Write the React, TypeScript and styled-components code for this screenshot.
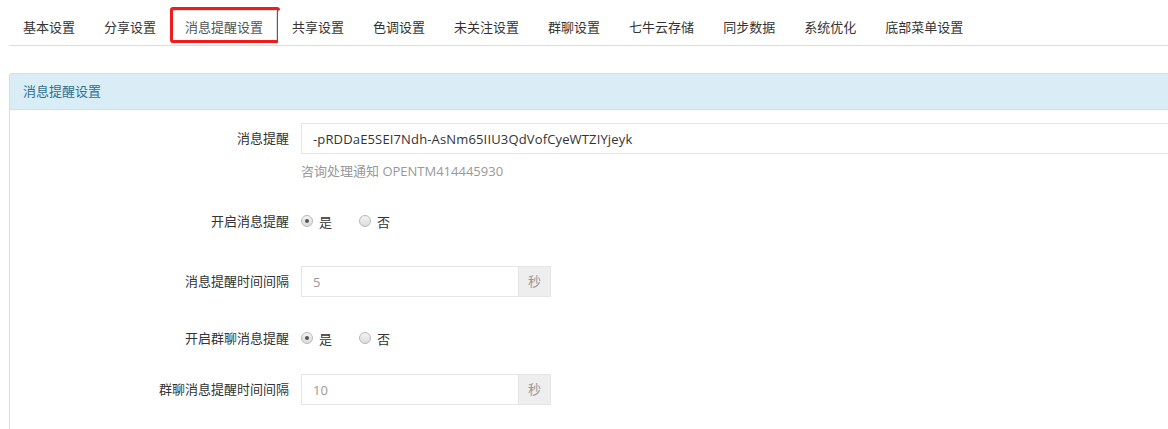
import styled, { createGlobalStyle } from "styled-components"

const GlobalStyle = createGlobalStyle`
    html, body {
        margin: 0;
        padding: 0;
        background: #fff;
        overflow: hidden;
    }
    body {
        font-family: "Open Sans", "Noto Sans CJK SC", sans-serif;
        font-size: 13px;
        color: #333;
    }
`;

const Page = styled.div`
    width: 1200px;
    padding-left: 9px;
`;

const Tabs = styled.ul`
    display: flex;
    margin: 0;
    padding: 0;
    list-style: none;
    height: 45px;
    border-bottom: 1px solid #ddd;
`;

const Tab = styled.li<{ $active?: boolean }>`
    position: relative;
    margin: 10px 1px -1px 0;
    padding: 0 13px;
    height: 35px;
    line-height: 33px;
    font-size: 13px;
    white-space: nowrap;
    box-sizing: border-box;
    color: ${props => props.$active ? "#555" : "#333"};
    border: 1px solid ${props => props.$active ? "#ddd" : "transparent"};
    border-bottom-color: ${props => props.$active ? "#fff" : "transparent"};
    background: #fff;
    border-radius: 2px 2px 0 0;
`;

const Highlight = styled.span`
    position: absolute;
    top: -4px;
    left: -2px;
    right: -4px;
    bottom: 1px;
    border: 3px solid #f21b1b;
    border-radius: 3px;
    pointer-events: none;
`;

const Panel = styled.div`
    margin-top: 27px;
    border: 1px solid #bce8f1;
    border-bottom: none;
    border-radius: 3px 0 0 0;
    height: 356px;
`;

const PanelHeading = styled.div`
    height: 35px;
    line-height: 35px;
    padding: 0 13px;
    background: #d9edf7;
    color: #31708f;
    border-bottom: 1px solid #bce8f1;
`;

const PanelBody = styled.div`
    padding-top: 13px;
`;

const FormGroup = styled.div<{ $mt?: number }>`
    display: grid;
    grid-template-columns: 279px 1fr;
    column-gap: 12px;
    margin-top: ${props => props.$mt || 0}px;
`;

const Label = styled.label<{ $h: number }>`
    text-align: right;
    height: ${props => props.$h}px;
    line-height: ${props => props.$h}px;
    color: #333;
    white-space: nowrap;
`;

const Control = styled.div``;

const TextInput = styled.input<{ $muted?: boolean }>`
    display: block;
    box-sizing: border-box;
    width: 100%;
    height: 31px;
    padding: 0 11px;
    border: 1px solid #e5e5e5;
    outline: none;
    font-family: "Open Sans", "Noto Sans CJK SC", sans-serif;
    font-size: 13px;
    letter-spacing: 0.15px;
    color: ${props => props.$muted ? "#999" : "#333"};
    background: #fff;
`;

const Help = styled.div`
    margin-top: 7px;
    line-height: 20px;
    color: #999;
`;

const InputGroup = styled.div`
    display: flex;
    width: 250px;
`;

const Addon = styled.span`
    flex: 0 0 32px;
    height: 31px;
    box-sizing: border-box;
    line-height: 29px;
    text-align: center;
    background: #eee;
    border: 1px solid #e5e5e5;
    border-left: none;
    color: #999;
`;

const Radios = styled.div`
    display: flex;
    align-items: center;
    height: 20px;
    gap: 27px;
`;

const RadioItem = styled.span`
    display: flex;
    align-items: center;
    gap: 6px;
    color: #333;
`;

const RadioCircle = styled.span<{ $checked?: boolean }>`
    position: relative;
    width: 12px;
    height: 12px;
    box-sizing: border-box;
    border-radius: 50%;
    border: 1px solid #b8b8b8;
    background: linear-gradient(#f4f4f4, #dcdcdc);
    ${props => props.$checked && `
        &::after {
            content: "";
            position: absolute;
            left: 3px;
            top: 3px;
            width: 4px;
            height: 4px;
            border-radius: 50%;
            background: #555;
        }
    `}
`;

const tabs = ["基本设置", "分享设置", "消息提醒设置", "共享设置", "色调设置", "未关注设置", "群聊设置", "七牛云存储", "同步数据", "系统优化", "底部菜单设置"]

const YesNo = () => (
    <Radios>
        <RadioItem><RadioCircle $checked />是</RadioItem>
        <RadioItem><RadioCircle />否</RadioItem>
    </Radios>
)

export default function App() {
    return (
        <Page>
            <GlobalStyle />
            <Tabs>
                {tabs.map(t => (
                    <Tab key={t} $active={t === "消息提醒设置"}>
                        {t}
                        {t === "消息提醒设置" ? <Highlight /> : null}
                    </Tab>
                ))}
            </Tabs>
            <Panel>
                <PanelHeading>消息提醒设置</PanelHeading>
                <PanelBody>
                    <FormGroup>
                        <Label $h={31}>消息提醒</Label>
                        <Control>
                            <TextInput readOnly value="-pRDDaE5SEI7Ndh-AsNm65IIU3QdVofCyeWTZIYjeyk" />
                            <Help>咨询处理通知 OPENTM414445930</Help>
                        </Control>
                    </FormGroup>
                    <FormGroup $mt={30}>
                        <Label $h={20}>开启消息提醒</Label>
                        <YesNo />
                    </FormGroup>
                    <FormGroup $mt={35}>
                        <Label $h={31}>消息提醒时间间隔</Label>
                        <InputGroup>
                            <TextInput readOnly $muted value="5" />
                            <Addon>秒</Addon>
                        </InputGroup>
                    </FormGroup>
                    <FormGroup $mt={31}>
                        <Label $h={20}>开启群聊消息提醒</Label>
                        <YesNo />
                    </FormGroup>
                    <FormGroup $mt={26}>
                        <Label $h={31}>群聊消息提醒时间间隔</Label>
                        <InputGroup>
                            <TextInput readOnly $muted value="10" />
                            <Addon>秒</Addon>
                        </InputGroup>
                    </FormGroup>
                </PanelBody>
            </Panel>
        </Page>
    )
}
